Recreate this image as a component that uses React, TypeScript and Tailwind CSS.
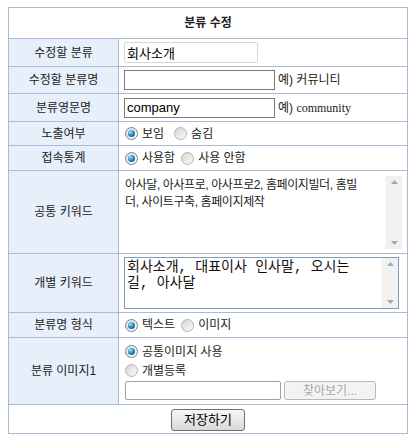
import React from 'react';

const ko = "font-['Liberation_Sans','Noto_Sans_CJK_KR',sans-serif]";

const Radio = ({ checked, label }: { checked?: boolean; label: string }) => (
  <label className="inline-flex items-center gap-[4px] mr-[6px]">
    <span
      className={
        checked
          ? 'w-[13px] h-[13px] rounded-full border border-[#6f8597] bg-gradient-to-br from-[#d6dde3] to-[#ffffff] flex items-center justify-center'
          : 'w-[13px] h-[13px] rounded-full border border-[#b4b4b4] bg-gradient-to-br from-[#d4d4d4] to-[#fbfbfb]'
      }
    >
      {checked && (
        <span className="w-[7px] h-[7px] rounded-full bg-[radial-gradient(circle_at_35%_30%,#9fe0f7,#1d7fae_55%,#0b4f78)]" />
      )}
    </span>
    <span className="text-[12px] text-[#222]">{label}</span>
  </label>
);

const ScrollBar = () => (
  <div className="w-[17px] h-full bg-[#f1f1f1] border-l border-[#f6f6f6] flex flex-col justify-between items-center py-[4px]">
    <svg width="7" height="4" viewBox="0 0 7 4">
      <path d="M0 4 L3.5 0 L7 4 Z" fill="#a8a8a8" />
    </svg>
    <svg width="7" height="4" viewBox="0 0 7 4">
      <path d="M0 0 L3.5 4 L7 0 Z" fill="#a8a8a8" />
    </svg>
  </div>
);

const Label = ({ children, h }: { children: React.ReactNode; h: string }) => (
  <td className={`${h} w-[112px] bg-[#e7effb] border border-[#a9bad4] text-center text-[12px] text-[#222] align-middle`}>
    {children}
  </td>
);

const Cell = ({ children }: { children: React.ReactNode }) => (
  <td className="border border-[#a9bad4] pl-[5px] align-middle bg-white">{children}</td>
);

export default function App() {
  return (
    <div className={`bg-white w-[416px] h-[445px] pt-[7px] pl-[8px] ${ko}`}>
      <table className="w-[400px] border-collapse border border-[#a9bad4]">
        <tbody>
          <tr>
            <td colSpan={2} className="h-[31px] border border-[#a9bad4] text-center text-[12px] font-bold text-[#222]">
              분류 수정
            </td>
          </tr>
          <tr>
            <Label h="h-[28px]">수정할 분류</Label>
            <Cell>
              <input
                defaultValue="회사소개"
                className="w-[134px] h-[21px] border border-[#d6d6d6] rounded-[2px] px-[2px] text-[13px] text-black outline-none block"
              />
            </Cell>
          </tr>
          <tr>
            <Label h="h-[27px]">수정할 분류명</Label>
            <Cell>
              <div className="flex items-center">
                <input className="w-[151px] h-[20px] border border-[#7a7a7a] px-[2px] text-[13px] outline-none" />
                <span className="ml-[3px] text-[12px] text-[#222]">예) 커뮤니티</span>
              </div>
            </Cell>
          </tr>
          <tr>
            <Label h="h-[28px]">분류영문명</Label>
            <Cell>
              <div className="flex items-center">
                <input
                  defaultValue="company"
                  className="w-[151px] h-[20px] border border-[#7a7a7a] px-[2px] text-[13px] text-black outline-none"
                />
                <span className="ml-[3px] text-[12px] text-[#222]">
                  예) <span className="font-['Liberation_Serif',serif] text-[12px]">community</span>
                </span>
              </div>
            </Cell>
          </tr>
          <tr>
            <Label h="h-[24px]">노출여부</Label>
            <Cell>
              <div className="flex items-center pl-[1px]">
                <Radio checked label="보임" />
                <span className="w-[4px]" />
                <Radio label="숨김" />
              </div>
            </Cell>
          </tr>
          <tr>
            <Label h="h-[25px]">접속통계</Label>
            <Cell>
              <div className="flex items-center pl-[1px]">
                <Radio checked label="사용함" />
                <Radio label="사용 안함" />
              </div>
            </Cell>
          </tr>
          <tr>
            <Label h="h-[83px]">공통 키워드</Label>
            <td className="border border-[#a9bad4] pl-[5px] pr-[5px] align-middle bg-white">
              <div className="flex h-[73px] w-[278px]">
                <textarea
                  readOnly
                  defaultValue={'아사달, 아사프로, 아사프로2, 홈페이지빌더, 홈빌\n더, 사이트구축, 홈페이지제작'}
                  className="flex-1 resize-none overflow-hidden whitespace-pre outline-none text-[12px] leading-[17px] text-[#222] pl-[1px] pt-[1px] tracking-[-0.4px]"
                />
                <ScrollBar />
              </div>
            </td>
          </tr>
          <tr>
            <Label h="h-[59px]">개별 키워드</Label>
            <Cell>
              <div className="flex h-[52px] w-[275px] border border-[#7f9db9]">
                <textarea
                  readOnly
                  defaultValue={'회사소개, 대표이사 인사말, 오시는\n길, 아사달'}
                  className="flex-1 resize-none overflow-hidden whitespace-pre outline-none font-['Liberation_Mono','Noto_Sans_CJK_KR',monospace] text-[14px] leading-[16px] text-[#111] pl-[2px] pt-[1px]"
                />
                <ScrollBar />
              </div>
            </Cell>
          </tr>
          <tr>
            <Label h="h-[25px]">분류명 형식</Label>
            <Cell>
              <div className="flex items-center pl-[1px]">
                <Radio checked label="텍스트" />
                <Radio label="이미지" />
              </div>
            </Cell>
          </tr>
          <tr>
            <Label h="h-[67px]">분류 이미지1</Label>
            <Cell>
              <div className="flex flex-col pl-[1px]">
                <div className="h-[19px] flex items-center">
                  <Radio checked label="공통이미지 사용" />
                </div>
                <div className="h-[19px] flex items-center">
                  <Radio label="개별등록" />
                </div>
                <div className="flex items-center gap-[3px] mt-[1px]">
                  <input className="w-[156px] h-[19px] border border-[#a0a0a0] rounded-[2px] outline-none" />
                  <button
                    disabled
                    className="w-[92px] h-[19px] border border-[#b8b8b8] rounded-[3px] bg-[#f3f3f3] text-[12px] text-[#a8a8a8] leading-none"
                  >
                    찾아보기...
                  </button>
                </div>
              </div>
            </Cell>
          </tr>
          <tr>
            <td colSpan={2} className="h-[29px] border border-[#a9bad4] text-center align-middle bg-white">
              <button className="w-[74px] h-[22px] border border-[#707070] rounded-[3px] bg-gradient-to-b from-[#f7f7f7] to-[#d9d9d9] text-[13px] text-black leading-none">
                저장하기
              </button>
            </td>
          </tr>
        </tbody>
      </table>
    </div>
  );
}
